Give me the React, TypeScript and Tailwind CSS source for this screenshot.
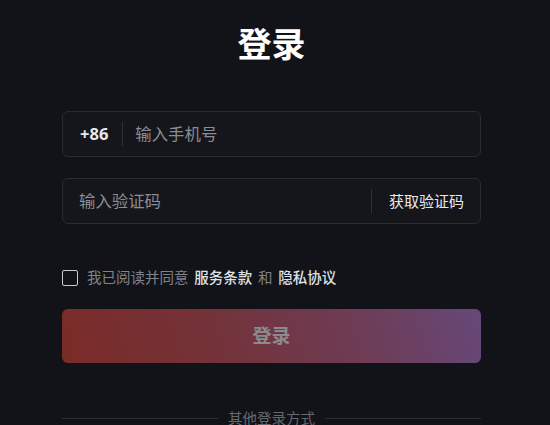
import React from "react";

export default function App() {
  return (
    <div className="min-h-[425px] w-full bg-[#121318] overflow-hidden" style={{ fontFamily: '"Noto Sans", "Noto Sans CJK SC", sans-serif' }}>
      <div className="ml-[62px] w-[419px] flex flex-col pt-[21px]">
        <h1 className="text-center text-[34px] leading-[46px] font-bold text-white">登录</h1>
        <div className="mt-[44px] h-[46px] rounded-md border border-[#2a2c33] bg-[#15161b] flex items-center">
          <span className="pl-[17px] pr-[14px] text-[16.5px] font-bold text-[#e8e9ec]">+86</span>
          <span className="w-px h-[24px] bg-[#2e3037]" />
          <span className="pl-[12px] text-[16.4px] text-[#8a8d94]">输入手机号</span>
        </div>
        <div className="mt-[21px] h-[46px] rounded-md border border-[#2a2c33] bg-[#15161b] flex items-center">
          <span className="flex-1 pl-[16px] text-[16.4px] text-[#8a8d94]">输入验证码</span>
          <span className="w-px h-[24px] bg-[#2e3037]" />
          <span className="w-[108px] pl-[1px] text-center text-[15px] text-[#e8e9ec]">获取验证码</span>
        </div>
        <div className="mt-[44px] flex items-center h-[20px]">
          <span className="w-[16px] h-[16px] border-[1.5px] border-[#c8cad0] rounded-[2px] bg-transparent" />
          <span className="ml-[9px] text-[14.5px] text-[#80838b] [word-spacing:2px]">我已阅读并同意 <span className="text-[#dfe1e6] font-medium">服务条款</span> 和 <span className="text-[#dfe1e6] font-medium">隐私协议</span></span>
        </div>
        <button className="mt-[21px] h-[54px] rounded-md bg-[linear-gradient(72deg,#7a2b27_0%,#743238_35%,#6e3c55_70%,#664879_100%)] flex items-center justify-center">
          <span className="text-[19px] font-bold text-[#8b8b8d]">登录</span>
        </button>
        <div className="mt-[46px] flex items-center">
          <span className="flex-1 h-px bg-[#2c2e35]" />
          <span className="px-[10px] text-[14.5px] leading-[18px] text-[#646872]">其他登录方式</span>
          <span className="flex-1 h-px bg-[#2c2e35]" />
        </div>
      </div>
    </div>
  );
}
